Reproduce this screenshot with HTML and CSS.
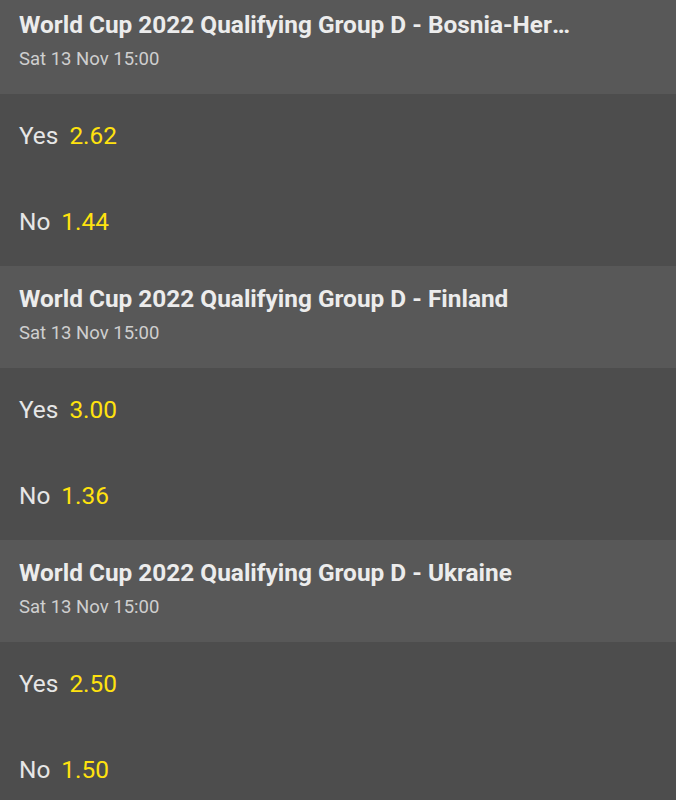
FILE: index.html
```html
<!DOCTYPE html>
<html>
<head>
<meta charset="utf-8">
<link rel="stylesheet" href="styles.css">
</head>
<body>
<div class="list">
  <section class="market first">
    <header class="head">
      <div class="title">World Cup 2022 Qualifying Group D - Bosnia-Herzegovina</div>
      <div class="date">Sat 13 Nov 15:00</div>
    </header>
    <div class="row"><span class="label">Yes</span><span class="odds">2.62</span></div>
    <div class="row"><span class="label">No</span><span class="odds">1.44</span></div>
  </section>
  <section class="market">
    <header class="head">
      <div class="title">World Cup 2022 Qualifying Group D - Finland</div>
      <div class="date">Sat 13 Nov 15:00</div>
    </header>
    <div class="row"><span class="label">Yes</span><span class="odds">3.00</span></div>
    <div class="row"><span class="label">No</span><span class="odds">1.36</span></div>
  </section>
  <section class="market">
    <header class="head">
      <div class="title">World Cup 2022 Qualifying Group D - Ukraine</div>
      <div class="date">Sat 13 Nov 15:00</div>
    </header>
    <div class="row"><span class="label">Yes</span><span class="odds">2.50</span></div>
    <div class="row"><span class="label">No</span><span class="odds">1.50</span></div>
  </section>
</div>
</body>
</html>
```
FILE: styles.css
```css
html, body {
  margin: 0;
  padding: 0;
  background: #4d4d4d;
  font-family: Roboto, "Noto Sans", sans-serif;
  overflow: hidden;
}
.list {
  display: flex;
  flex-direction: column;
}
.market.first {
  margin-top: -8px;
}
.head {
  background: #585858;
  height: 102px;
  box-sizing: border-box;
  padding: 18px 19px 0;
}
.title {
  color: #ececec;
  font-weight: 700;
  font-size: 24.4px;
  line-height: 30px;
  white-space: nowrap;
  overflow: hidden;
  text-overflow: ellipsis;
  max-width: 560px;
}
.date {
  color: #cfcfcf;
  font-size: 18.5px;
  line-height: 24px;
  margin-top: 7px;
}
.row {
  height: 86px;
  box-sizing: border-box;
  padding: 0 19px 4px;
  display: flex;
  align-items: center;
  font-size: 24.4px;
  background: #4d4d4d;
}
.label {
  color: #e6e6e6;
  margin-right: 11px;
}
.odds {
  color: #ffe20f;
}
```
